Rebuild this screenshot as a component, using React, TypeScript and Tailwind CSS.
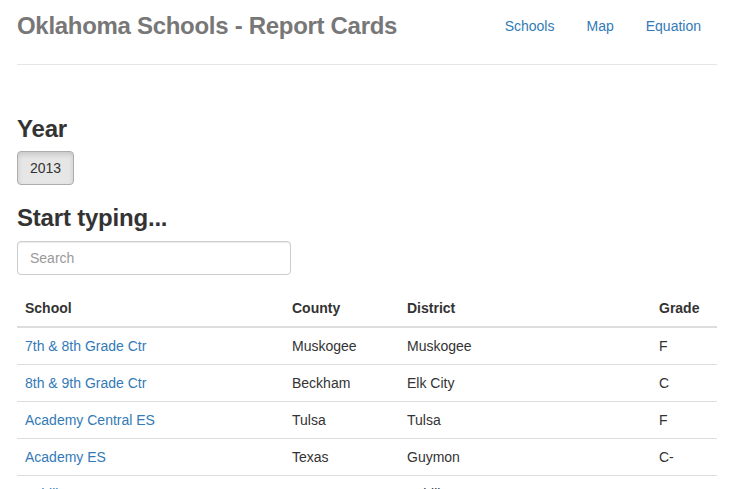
import React from 'react';

type Row = {
  school: string;
  county: string;
  district: string;
  grade: string;
};

const rows: Row[] = [
  { school: '7th & 8th Grade Ctr', county: 'Muskogee', district: 'Muskogee', grade: 'F' },
  { school: '8th & 9th Grade Ctr', county: 'Beckham', district: 'Elk City', grade: 'C' },
  { school: 'Academy Central ES', county: 'Tulsa', district: 'Tulsa', grade: 'F' },
  { school: 'Academy ES', county: 'Texas', district: 'Guymon', grade: 'C-' },
  { school: 'Achille ES', county: 'Bryan', district: 'Achille', grade: 'C' },
];

export default function App() {
  return (
    <div className="min-h-screen bg-white font-['Liberation_Sans',Arial,sans-serif] text-[14px] leading-5 text-[#333]">
      <div className="mx-[17px] w-[700px]">
        {/* header */}
        <div className="flex items-center justify-between border-b border-[#e5e5e5] pt-[6px] pb-[18px]">
          <h3 className="text-[24px] leading-[40px] font-bold tracking-[-0.3px] text-[#777]">
            Oklahoma Schools - Report Cards
          </h3>
          <nav className="mr-[1px] flex gap-[2px]">
            {['Schools', 'Map', 'Equation'].map((label) => (
              <a key={label} href="#" className="px-[15px] py-[10px] text-[#337ab7]">
                {label}
              </a>
            ))}
          </nav>
        </div>

        <h3 className="mt-[51px] text-[24px] leading-[26px] font-bold tracking-[-0.2px]">Year</h3>
        <button className="mt-[9px] h-[34px] rounded-[4px] border border-[#adadad] bg-[#e6e6e6] px-[12px] shadow-[inset_0_3px_5px_rgba(0,0,0,0.125)]">
          2013
        </button>

        <h3 className="mt-[20px] text-[24px] leading-[26px] font-bold tracking-[-0.2px]">Start typing...</h3>
        <input
          type="text"
          placeholder="Search"
          className="mt-[10px] block h-[34px] w-[274px] rounded-[4px] border border-[#ccc] px-[12px] text-[14px] shadow-[inset_0_1px_1px_rgba(0,0,0,0.075)] outline-none placeholder:text-[#999]"
        />

        <table className="mt-[15px] w-full border-collapse text-left">
          <thead>
            <tr className="border-b-2 border-[#ddd]">
              <th className="w-[267px] p-[8px] font-bold">School</th>
              <th className="w-[115px] p-[8px] font-bold">County</th>
              <th className="w-[252px] p-[8px] font-bold">District</th>
              <th className="p-[8px] font-bold">Grade</th>
            </tr>
          </thead>
          <tbody>
            {rows.map((r) => (
              <tr key={r.school} className="border-b border-[#ddd]">
                <td className="p-[8px]">
                  <a href="#" className="text-[#337ab7]">
                    {r.school}
                  </a>
                </td>
                <td className="p-[8px]">{r.county}</td>
                <td className="p-[8px]">{r.district}</td>
                <td className="p-[8px]">{r.grade}</td>
              </tr>
            ))}
          </tbody>
        </table>
      </div>
    </div>
  );
}
